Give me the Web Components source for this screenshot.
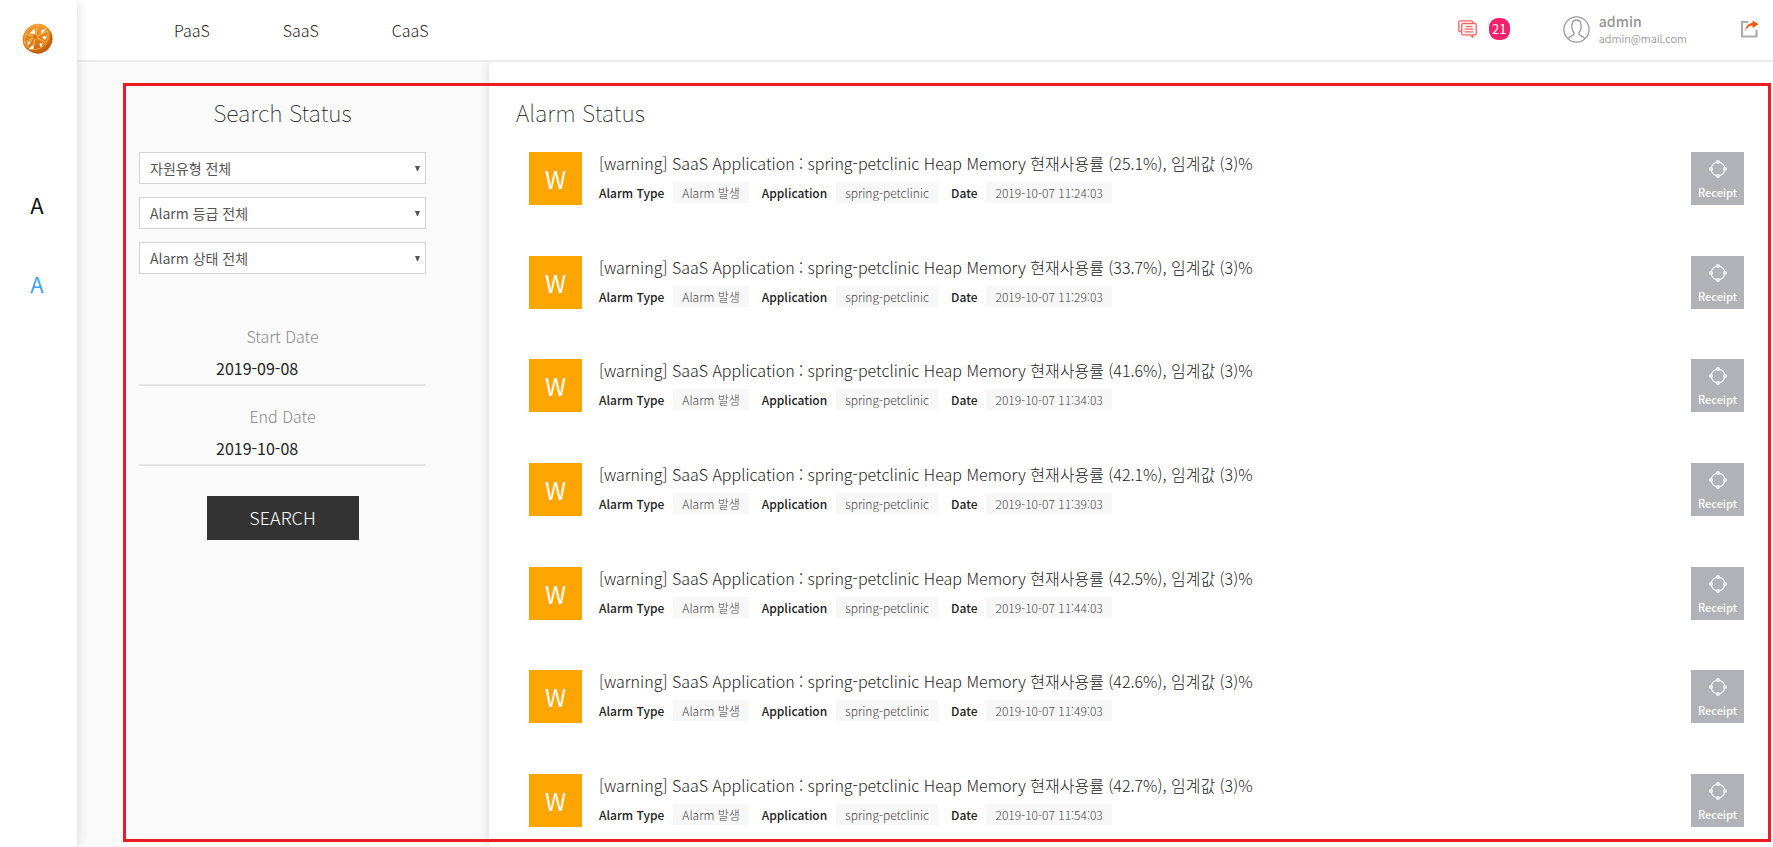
<!DOCTYPE html>
<html lang="ko">
<head>
<meta charset="utf-8">
<meta name="viewport" content="width=device-width, initial-scale=1">
<title>Alarm Status</title>
<style>
  body {
    margin: 0;
    background: #fff;
    color: #333;
    font-family: "Noto Sans CJK KR", "Noto Sans", sans-serif;
    font-size: 16px;
  }
</style>
</head>
<body>
<monitor-app></monitor-app>

<script>
const define = (name, html, setup) => {
  const template = document.createElement('template');
  template.innerHTML = html;
  customElements.define(name, class extends HTMLElement {
    constructor() {
      super();
      this.attachShadow({ mode: 'open' }).append(template.content.cloneNode(true));
    }
    connectedCallback() {
      if (setup) setup(this, this.shadowRoot);
    }
  });
};

/* Left rail: logo and the two text size links */
define('app-rail', `
  <style>
    :host { display: flex; flex-direction: column; align-items: center; box-sizing: border-box;
            width: 77px; padding: 22px 3px 0 0; background: #fff; box-shadow: 0 0 12px rgba(0,0,0,.14); position: relative; z-index: 2; }
    svg { display: block; }
    .logo { margin-bottom: 133px; }
    nav { display: flex; flex-direction: column; gap: 47px; }
    nav a { font-size: 22px; line-height: 32px; color: #111; text-decoration: none; }
    nav a.on { color: #39a4ff; }
  </style>
  <a class="logo" href="#" aria-label="Home">
    <svg width="32" height="33" viewBox="0 0 32 33">
      <defs><linearGradient id="g" x1="0" y1="0" x2="1" y2="1">
        <stop offset="0" stop-color="#f9a63a"/><stop offset=".6" stop-color="#e27a12"/><stop offset="1" stop-color="#b8560a"/>
      </linearGradient></defs>
      <ellipse cx="17" cy="17" rx="14.5" ry="14.8" fill="#bd6210" transform="rotate(35 17 17)"/>
      <ellipse cx="15.6" cy="15.8" rx="13" ry="15" fill="url(#g)" transform="rotate(42 15.6 15.8)"/>
      <ellipse cx="15.2" cy="15.4" rx="11" ry="13" fill="none" stroke="#f6a440" stroke-width="1" transform="rotate(42 15.2 15.4)"/>
      <path d="M14 15L5 12M14 15L17 3M14 15L26 9M14 15L24 20M14 15L12 28M14 15L3 21" stroke="#fab65c" stroke-width="1.3"/>
      <path d="M8.500 11.500l5-5 .8 5.500zM20 8.500l5-2-4 5.500zM21 15l5-1.500-2 4.500zM18 22l4-1.500-2 5zM7.500 27.500l4-5 1 4zM6.500 21l4.500-3-4 6z" fill="#fff"/>
      <circle cx="14" cy="15" r="2" fill="#d0700f"/>
    </svg>
  </a>
  <nav><a href="#">A</a><a class="on" href="#">A</a></nav>
`);

/* Top bar */
define('app-header', `
  <style>
    :host { display: flex; align-items: center; justify-content: space-between; box-sizing: border-box; height: 62px;
            padding: 0 14px 0 97px; background: #fff; border-bottom: 2px solid #ebebeb; }
    a { color: inherit; text-decoration: none; }
    svg { display: block; }
    nav { display: flex; gap: 73px; font-size: 16px; line-height: 26px; font-weight: 300; color: #222; }
    .tools, .alerts, .user { display: flex; align-items: center; }
    .tools { margin-bottom: 2px; }
    .alerts { gap: 12px; margin-right: 53px; }
    .count { min-width: 21px; box-sizing: border-box; height: 22px; border-radius: 9px; background: #f5206c;
             color: #fff; font-size: 13px; line-height: 21px; text-align: center; }
    .user { gap: 9px; margin-right: 53px; color: #949494; }
    .name { font-size: 14px; line-height: 18px; font-weight: 500; }
    .mail { font-size: 11px; line-height: 16px; font-weight: 300; color: #777; }
  </style>
  <nav><a href="#">PaaS</a><a href="#">SaaS</a><a href="#">CaaS</a></nav>
  <div class="tools">
    <a class="alerts" href="#" aria-label="Alarms">
      <svg width="19" height="18" viewBox="0 0 19 18" fill="none" stroke="#f9605f" stroke-width="1.3">
        <path d="M3.5 11.5H2A1.2 1.2 0 0 1 .8 10.300V2A1.200 1.200 0 0 1 2 .8h11.500A1.200 1.200 0 0 1 14.700 2v1"/>
        <path d="M5 3.500h12a1.200 1.200 0 0 1 1.200 1.200v9a1.200 1.200 0 0 1-1.200 1.200h-2.200V17l-2.500-2.100H5a1.200 1.200 0 0 1-1.200-1.200v-9A1.200 1.200 0 0 1 5 3.500zM8 6.700h6.500M6.500 9.200h9M6.500 11.900h9"/>
      </svg>
      <span class="count">21</span>
    </a>
    <div class="user">
      <svg width="27" height="27" viewBox="0 0 27 27" fill="none" stroke="#9a9a9a" stroke-width="1.300">
        <circle cx="13.500" cy="13.500" r="12.600"/>
        <path d="M5.200 22.800c.5-1.800 2-2.300 3.800-3 1.800-.7 2.200-1 2.200-2.500 0-.8-.8-1.200-1.200-2.300-.5-1.400-1.200-2-1.200-3.500C8.600 6.500 10 4 13.500 4s4.900 2.500 4.700 7.500c0 1.500-.7 2.100-1.200 3.500-.4 1.100-1.200 1.500-1.200 2.300 0 1.500.4 1.800 2.200 2.500 1.800.7 3.300 1.200 3.800 3"/>
      </svg>
      <div><div class="name">admin</div><div class="mail">admin@mail.com</div></div>
    </div>
    <a href="#" aria-label="Log out">
      <svg width="19" height="18" viewBox="0 0 19 18" fill="none">
        <path d="M8 2H2V16.500H16.500V10" stroke="#ababab" stroke-width="2.200"/>
        <path d="M5 11C5.500 6.500 8 3.500 12.500 3V.500L18.500 4.200 12.500 8V5.600C9.500 5.600 7 7.500 5 11z" fill="#ff5310"/>
      </svg>
    </a>
  </div>
`);

define('filter-select', `
  <style>
    :host { display: grid; align-items: center; }
    select, svg { grid-area: 1 / 1; }
    select { appearance: none; box-sizing: border-box; width: 100%; height: 32px; margin: 0; padding: 0 24px 0 10px;
             border: 1px solid #d3d3d3; border-radius: 0; background: #fff; color: #555;
             font-family: inherit; font-size: 14px; line-height: 20px; }
    svg { justify-self: end; margin-right: 6px; pointer-events: none; }
  </style>
  <select><option></option></select>
  <svg width="5" height="5" viewBox="0 0 5 5"><path d="M0 0h5L3 5H2z" fill="#555"/></svg>
`, (host, root) => {
  root.querySelector('option').textContent = host.getAttribute('value');
  root.querySelector('select').setAttribute('aria-label', host.getAttribute('name'));
});

define('date-field', `
  <style>
    :host { display: flex; flex-direction: column; border-bottom: 2px solid #e5e5e5; }
    label { text-align: center; font-size: 16px; line-height: 24px; font-weight: 300; color: #888; }
    input { box-sizing: border-box; width: 100%; height: 36px; margin: 0; padding: 4px 0 0 77px; border: 0; background: none;
            color: #222; font-family: inherit; font-size: 16px; }
  </style>
  <label for="date"><slot></slot></label>
  <input id="date" type="text">
`, (host, root) => { root.querySelector('input').value = host.getAttribute('value'); });

/* Filter column */
define('search-panel', `
  <style>
    :host { display: block; box-sizing: border-box; width: 412px; padding: 33px 63px 0 62px; background: #fafafa; }
    h2 { margin: 0 0 23px; text-align: center; font-size: 23px; line-height: 34px; font-weight: 100; color: #111; }
    form { display: flex; flex-direction: column; }
    .filters { display: grid; gap: 13px; margin-bottom: 50px; }
    .dates { display: grid; gap: 18px; margin-bottom: 30px; }
    button { align-self: center; width: 152px; height: 44px; padding: 0 0 2px; border: 0; background: #333; color: #fff;
             font-family: inherit; font-size: 18px; font-weight: 300; }
  </style>
  <h2>Search Status</h2>
  <form>
    <div class="filters">
      <filter-select name="Resource type" value="자원유형 전체"></filter-select>
      <filter-select name="Alarm level" value="Alarm 등급 전체"></filter-select>
      <filter-select name="Alarm state" value="Alarm 상태 전체"></filter-select>
    </div>
    <div class="dates">
      <date-field value="2019-09-08">Start Date</date-field>
      <date-field value="2019-10-08">End Date</date-field>
    </div>
    <button type="button">SEARCH</button>
  </form>
`);

define('meta-pair', `
  <style>
    :host { display: flex; align-items: center; gap: 9px; font-size: 12px; line-height: 21px; }
    .key { font-weight: 500; color: #222; }
    .chip { padding: 0 9px; background: #f7f7f7; color: #444; font-weight: 300; }
  </style>
  <span class="key"></span><span class="chip"><slot></slot></span>
`, (host, root) => { root.querySelector('.key').textContent = host.getAttribute('name'); });

define('alarm-item', `
  <style>
    :host { display: flex; align-items: center; gap: 17px; }
    .level { width: 53px; height: 53px; background: #ffa500; color: #fff; font-size: 24px; line-height: 53px; text-align: center; }
    .body { flex: 1; min-width: 0; padding-bottom: 3px; }
    .title { font-size: 16px; line-height: 24px; font-weight: 300; color: #222; }
    .meta { display: flex; gap: 13px; margin-top: 7px; }
    button { display: flex; flex-direction: column; align-items: center; gap: 6px; width: 53px; height: 53px; padding: 8px 0 0; border: 0;
             background: #b1b2b7; color: #fff; font-family: inherit; font-size: 11px; line-height: 16px; font-weight: 500; }
    svg { display: block; }
  </style>
  <div class="level">W</div>
  <div class="body">
    <div class="title"><slot></slot></div>
    <div class="meta">
      <meta-pair name="Alarm Type">Alarm 발생</meta-pair>
      <meta-pair name="Application">spring-petclinic</meta-pair>
      <meta-pair name="Date"><slot name="date"></slot></meta-pair>
    </div>
  </div>
  <button type="button">
    <svg width="18" height="18" viewBox="0 0 18 18" fill="none" stroke="#f4f4f6" stroke-width="1.200">
      <circle cx="9" cy="9" r="6.800"/>
      <g fill="#dcdce0"><circle cx="9" cy="2" r="1.400"/><circle cx="16" cy="9" r="1.400"/><circle cx="9" cy="16" r="1.400"/><circle cx="2" cy="9" r="1.400"/></g>
    </svg>
    Receipt
  </button>
`);

define('alarm-list', `
  <style>
    :host { display: flex; flex-direction: column; flex: 1; min-width: 0; box-sizing: border-box; padding: 33px 29px 19px 27px;
            background: #fff; box-shadow: 0 0 10px rgba(0,0,0,.14); }
    h2 { margin: 0 0 22px; font-size: 23px; line-height: 34px; font-weight: 100; color: #111; }
    .rows { display: flex; flex: 1; flex-direction: column; justify-content: space-between; gap: 20px; padding-left: 13px; }
  </style>
  <h2>Alarm Status</h2>
  <div class="rows"></div>
`, (host, root) => {
  const alarms = [['25.1', '24'], ['33.7', '29'], ['41.6', '34'], ['42.1', '39'], ['42.5', '44'], ['42.6', '49'], ['42.7', '54']];
  root.querySelector('.rows').innerHTML = alarms.map(([usage, minute]) => `
    <alarm-item>[warning] SaaS Application : spring-petclinic Heap Memory 현재사용률 (${usage}%), 임계값 (3)%<span slot="date">2019-10-07 11:${minute}:03</span></alarm-item>`).join('');
});

define('monitor-app', `
  <style>
    :host { display: flex; min-height: 100vh; }
    .page { flex: 1; min-width: 0; display: flex; flex-direction: column; }
    main { position: relative; flex: 1; display: flex; overflow: hidden; }
    .frame { position: absolute; inset: 21px 2px 5px 46px; border: 3px solid #ed1c24; pointer-events: none; }
  </style>
  <app-rail></app-rail>
  <div class="page">
    <app-header></app-header>
    <main>
      <search-panel></search-panel>
      <alarm-list></alarm-list>
      <div class="frame"></div>
    </main>
  </div>
`);
</script>
</body>
</html>
